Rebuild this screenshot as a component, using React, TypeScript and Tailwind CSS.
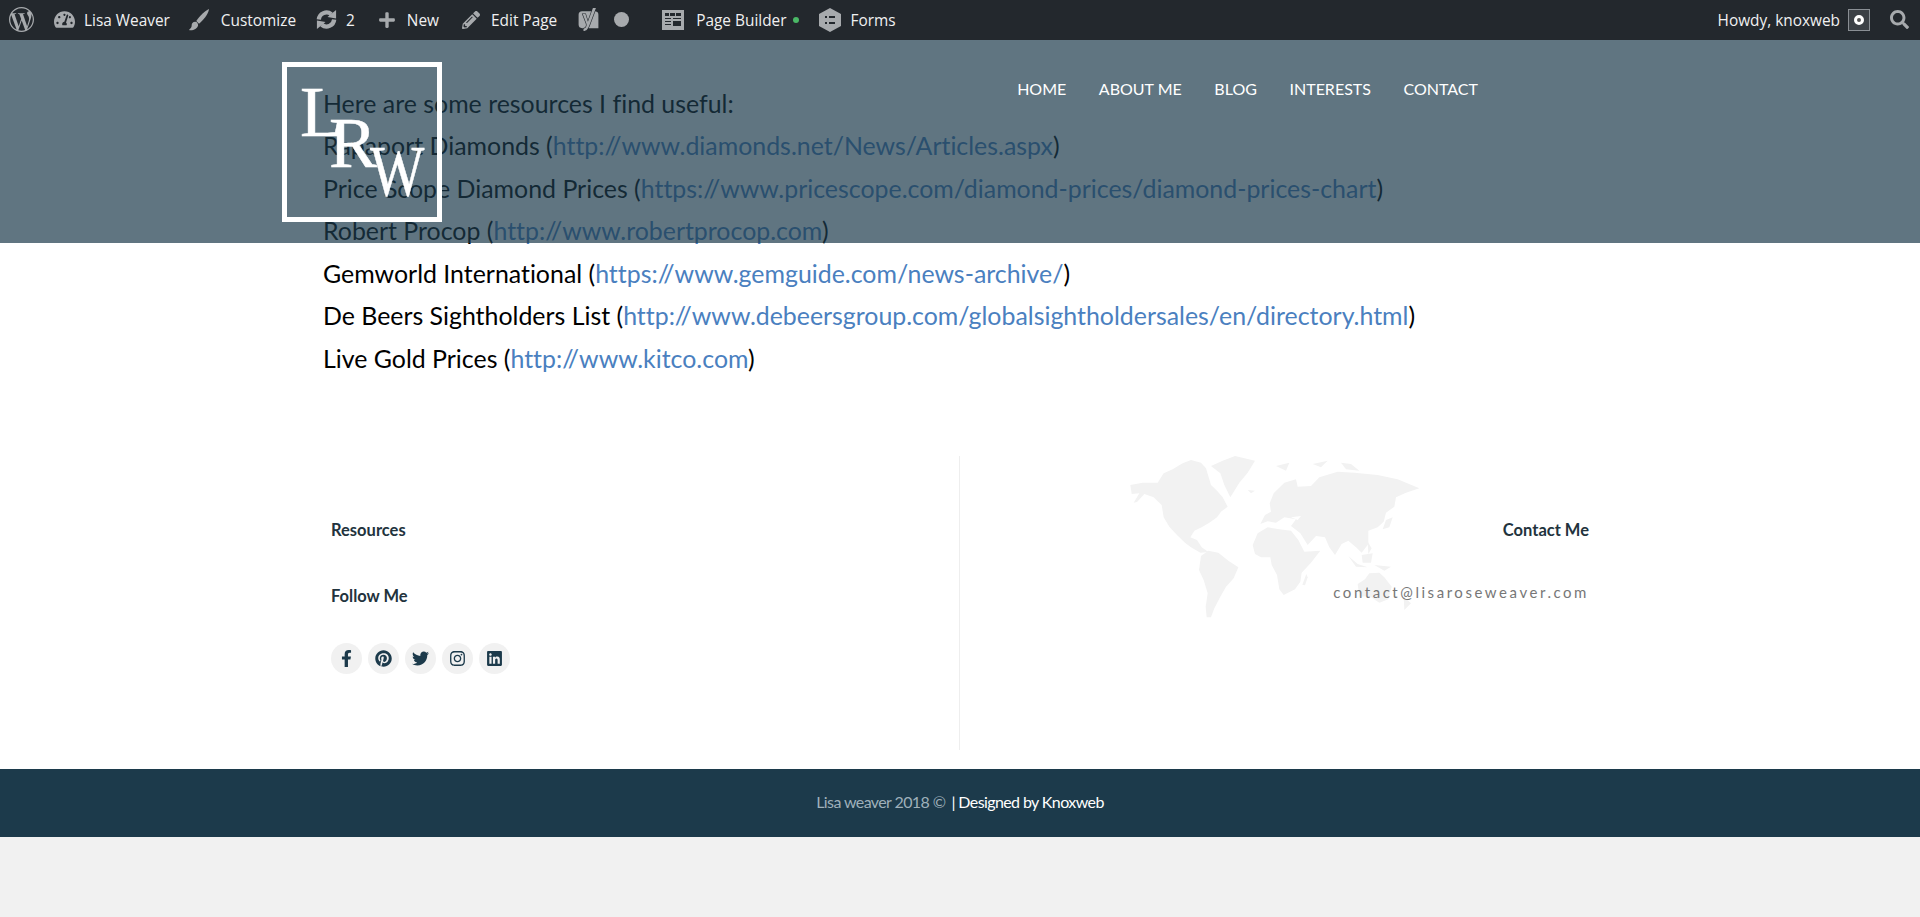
import React from "react";
import { SiWordpress, SiYoast } from "react-icons/si";
import {
  FaFacebookF,
  FaInstagram,
  FaLinkedin,
  FaPencilAlt,
  FaPinterest,
  FaPlus,
  FaSearch,
  FaTachometerAlt,
  FaTwitter,
} from "react-icons/fa";

const resources = [
  { name: "Rapaport Diamonds", url: "http://www.diamonds.net/News/Articles.aspx" },
  { name: "Price Scope Diamond Prices", url: "https://www.pricescope.com/diamond-prices/diamond-prices-chart" },
  { name: "Robert Procop", url: "http://www.robertprocop.com" },
  { name: "Gemworld International", url: "https://www.gemguide.com/news-archive/" },
  { name: "De Beers Sightholders List", url: "http://www.debeersgroup.com/globalsightholdersales/en/directory.html" },
  { name: "Live Gold Prices", url: "http://www.kitco.com" },
];

const socials = [FaFacebookF, FaPinterest, FaTwitter, FaInstagram, FaLinkedin];

const WorldMap = () => (
  <svg viewBox="0 0 1500 570" className="absolute left-[151px] top-[-16px] h-[190px] w-[500px]" fill="#f2f2f2">
    {/* north america */}
    <path d="M58 135 L95 128 L140 128 L158 100 L185 88 L215 70 L240 60 L270 68 L285 85 L300 135 L318 152 L335 172 L350 200 L330 215 L318 232 L295 248 L272 262 L250 272 L238 292 L258 300 L272 322 L292 336 L268 338 L240 322 L222 308 L198 285 L175 260 L158 232 L152 195 L128 172 L100 162 L78 186 L68 188 L85 160 L62 162Z" />
    {/* greenland */}
    <path d="M300 78 L335 62 L372 48 L432 62 L410 98 L385 128 L358 172 L340 135 L328 100Z" />
    <path d="M410 150 L432 152 L420 160Z" />
    {/* south america */}
    <path d="M270 348 L292 332 L322 338 L352 362 L382 382 L368 415 L345 440 L328 470 L310 505 L300 532 L287 532 L284 500 L290 460 L278 420 L264 390Z" />
    {/* africa */}
    <path d="M425 315 L440 280 L470 262 L505 268 L540 272 L562 300 L580 335 L628 332 L600 368 L572 398 L568 425 L552 448 L518 465 L505 448 L498 405 L482 375 L478 352 L450 352 L432 342Z" />
    <path d="M574 434 L586 402 L590 412 L582 436Z" />
    {/* eurasia */}
    <path d="M448 252 L462 225 L480 215 L476 190 L488 160 L520 128 L555 118 L560 140 L600 138 L625 112 L680 95 L730 98 L800 105 L860 118 L925 145 L885 158 L855 172 L850 200 L825 218 L818 245 L800 262 L772 272 L772 312 L752 338 L735 322 L712 302 L692 312 L672 345 L655 322 L642 292 L615 288 L590 315 L568 280 L540 258 L555 238 L520 232 L495 248 L470 244Z" />
    <path d="M540 232 L570 228 L560 240Z" fill="#ffffff" />
    <path d="M495 78 L535 68 L525 92Z" />
    <path d="M605 72 L650 62 L630 82Z" />
    <path d="M690 68 L720 72 L745 92 L705 88Z" />
    {/* islands */}
    <path d="M712 348 L740 372 L770 382 L735 380Z" />
    <path d="M752 345 L785 340 L780 368 L755 368Z" />
    <path d="M770 305 L782 325 L772 342Z" />
    <path d="M790 375 L840 380 L820 392Z" />
    <path d="M825 240 L845 232 L835 262 L815 268Z" />
    {/* australia */}
    <path d="M740 432 L762 418 L775 400 L805 398 L820 412 L842 440 L832 478 L805 488 L775 468 L745 470Z" />
    <path d="M878 470 L900 490 L880 510Z" />
  </svg>
);

export default function App() {
  return (
    <div className="relative min-h-[917px] bg-[#f1f1f1] font-['Lato',sans-serif] [font-variant-ligatures:none]">
      {/* Admin bar */}
      <div className="flex h-10 items-center justify-between bg-[#23282d] font-['Open_Sans',sans-serif] text-[15.4px] text-[#f0f0f1]">
        <div className="flex items-center">
          <SiWordpress className="ml-[9px] text-[25px] text-[#a7aaad]" />
          <FaTachometerAlt className="ml-[20px] text-[21px] text-[#a7aaad]" />
          <span className="ml-[9px] pt-[2px]">Lisa Weaver</span>
          <svg viewBox="0 0 24 24" className="ml-[18px] size-[22px]" fill="#a7aaad">
            <path d="M23 0C19 2 13 7 9 13l3 3C17 12 22 6 23 0z" />
            <path d="M8 14c-3 0-4 2-4 4 0 2-1 3-3 5 4 1 9-1 10-5 0-2-1-4-3-4z" />
          </svg>
          <span className="ml-[11px] pt-[2px]">Customize</span>
          <svg viewBox="0 0 24 24" className="ml-[19px] size-[23px]" fill="none" stroke="#a7aaad" strokeWidth="4.5">
            <path d="M4 12a8 8 0 0 1 13-5.5" />
            <path d="M20 12a8 8 0 0 1-13 5.5" />
            <path d="M13 9.5 22 11V2z M11 14.5 2 13v9z" fill="#a7aaad" stroke="none" />
          </svg>
          <span className="ml-[8px] pt-[2px]">2</span>
          <FaPlus className="ml-[23px] text-[18px] text-[#a7aaad]" />
          <span className="ml-[11px] pt-[2px]">New</span>
          <FaPencilAlt className="ml-[23px] text-[18px] text-[#a7aaad]" />
          <span className="ml-[11px] pt-[2px]">Edit Page</span>
          <SiYoast className="ml-[20px] text-[23px] text-[#a7aaad]" />
          <span className="ml-[14px] size-[15px] rounded-full bg-[#a7aaad]" />
          <svg viewBox="0 0 22 20" className="ml-[33px] h-5 w-[22px]" fill="#a7aaad">
            <path d="M0 0h22v20H0z M3 3v3h4V3z M8 3v3h5V3z M14 3v3h5V3z M3 8v1h6V8z M11 8v1h8V8z M3 11v1h6v-1z M11 11v5h8v-5z M3 14v1h6v-1z" fillRule="evenodd" />
          </svg>
          <span className="ml-[12px] pt-[2px]">Page Builder</span>
          <span className="ml-[6px] size-[6px] rounded-full bg-[#4ab866]" />
          <svg viewBox="0 0 22 24" className="ml-[20px] h-6 w-[22px]" fill="#a7aaad">
            <path d="M11 0 22 6v12L11 24 0 18V6z M6 8v2h2V8z M10 8v2h6V8z M6 14v2h2v-2z M10 14v2h6v-2z" fillRule="evenodd" />
          </svg>
          <span className="ml-[10px] pt-[2px]">Forms</span>
        </div>
        <div className="flex items-center">
          <span className="pt-[2px]">Howdy, knoxweb</span>
          <span className="ml-[8px] flex size-[22px] items-center justify-center border border-[#8a8f94] bg-[#3c4146]">
            <span className="size-[10px] rounded-full border-[3px] border-white bg-[#555]" />
          </span>
          <FaSearch className="ml-[20px] mr-[11px] text-[19px] text-[#a7aaad]" />
        </div>
      </div>

      {/* Header overlay */}
      <header className="absolute left-0 right-0 top-10 h-[203px] bg-[#1c3a4b]/70">
        <div className="flex w-[1478px] items-start justify-between pl-[282px] pt-[22px]">
          <div className="relative size-[160px] border-[5px] border-white font-['Liberation_Serif',serif] text-white [-webkit-text-stroke:0.5px_white]">
            <span className="absolute left-[13px] top-[9px] text-[72px] leading-none">L</span>
            <span className="absolute left-[42px] top-[40px] text-[72px] leading-none">R</span>
            <span className="absolute left-[83px] top-[68px] origin-left scale-x-[0.8] text-[72px] leading-none">W</span>
          </div>
          <nav className="flex gap-[32.6px] pt-[17px] text-[16px] leading-[20px] text-white">
            <span>HOME</span>
            <span>ABOUT ME</span>
            <span>BLOG</span>
            <span>INTERESTS</span>
            <span>CONTACT</span>
          </nav>
        </div>
      </header>

      {/* Page content */}
      <main className="bg-white">
        <div className="pl-[323px] pt-[42px] pb-[77px] text-[24.9px] leading-[42.45px] text-black">
          <p>Here are some resources I find useful:</p>
          {resources.map((r) => (
            <p key={r.url}>
              {r.name} (<a className="text-[#4a80bf]">{r.url}</a>)
            </p>
          ))}
        </div>

        {/* Widgets */}
        <div className="mx-auto grid w-[1274px] grid-cols-2 pb-[19px]">
          <div className="h-[294px] border-r border-[#eeeeee] pl-2 pt-[64px] text-[#22333d]">
            <h4 className="text-[16.5px] font-bold leading-[20px]">Resources</h4>
            <h4 className="mt-[46px] text-[16.5px] font-bold leading-[20px]">Follow Me</h4>
            <div className="mt-[37px] flex gap-[6px]">
              {socials.map((Icon, i) => (
                <span key={i} className="flex size-[31px] items-center justify-center rounded-full bg-[#f1f1f1] text-[17px] text-[#1c3a4b]">
                  <Icon />
                </span>
              ))}
            </div>
          </div>
          <div className="relative pr-2 pt-[64px] text-right">
            <WorldMap />
            <h4 className="relative text-[16.5px] font-bold leading-[20px] text-[#22333d]">Contact Me</h4>
            <p className="relative mt-[42px] text-[15px] leading-[20px] tracking-[2.55px] text-[#777777]">contact@lisaroseweaver.com</p>
          </div>
        </div>
      </main>

      {/* Footer */}
      <footer className="flex h-[68px] items-center justify-center bg-[#1c3a4b] pb-[3px] text-[16px] tracking-[-0.6px] text-white">
        <span className="text-[#9fb0ba]">Lisa weaver 2018 ©</span>
        <span className="ml-[6px]">| Designed by Knoxweb</span>
      </footer>
    </div>
  );
}
